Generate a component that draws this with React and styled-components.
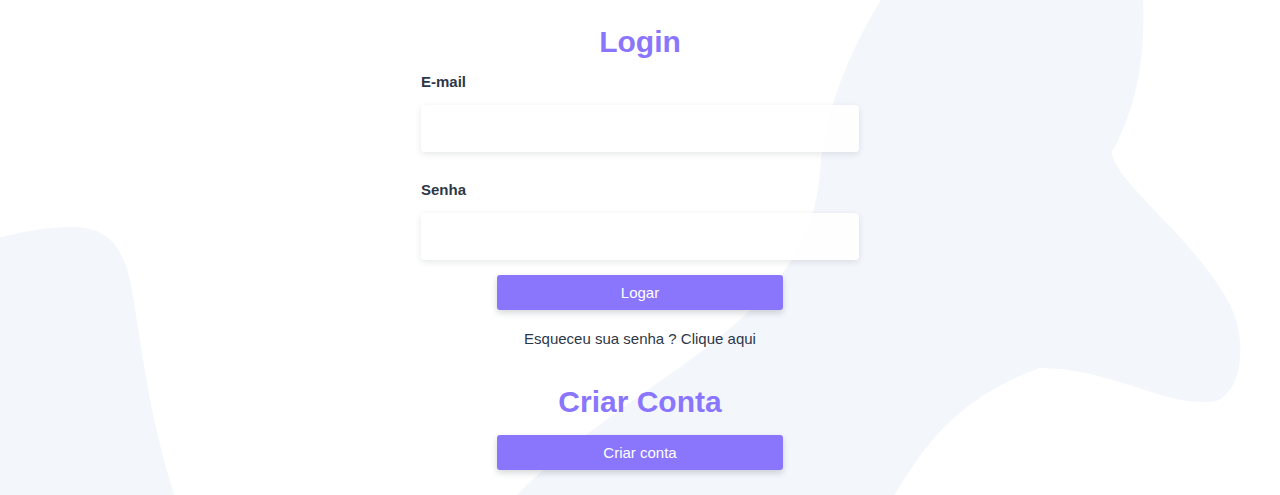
import React from "react";
import styled, { createGlobalStyle } from "styled-components";

const GlobalStyle = createGlobalStyle`
  * {
    box-sizing: border-box;
  }
  body {
    margin: 0;
    font-family: "Liberation Sans", Arial, sans-serif;
    background: #fff;
  }
`;

const Page = styled.div`
  position: relative;
  min-height: 100vh;
  overflow: hidden;
  background: #fff;
`;

const Backdrop = styled.svg`
  position: absolute;
  top: 0;
  left: 0;
  width: 1280px;
  height: 495px;
  z-index: 0;
`;

const Form = styled.form`
  position: relative;
  z-index: 1;
  width: 438px;
  margin: 0 auto;
  padding-top: 24px;
  display: flex;
  flex-direction: column;
`;

const Title = styled.h1`
  margin: 0 0 ${(props) => props.gap || 13}px;
  font-size: 30px;
  line-height: 36px;
  font-weight: 700;
  color: #8a76fd;
  text-align: center;
`;

const Label = styled.label`
  display: block;
  font-size: 15px;
  line-height: 18px;
  font-weight: 700;
  color: #2d3748;
  margin-bottom: 14px;
`;

const Field = styled.div`
  margin-bottom: ${(props) => props.gap || 0}px;
`;

const Input = styled.input`
  display: block;
  width: 100%;
  height: 47px;
  border: none;
  border-radius: 4px;
  padding: 0 14px;
  background: rgba(255, 255, 255, 0.88);
  box-shadow: 0 2px 6px rgba(45, 55, 72, 0.12);
  font-family: inherit;
  font-size: 15px;
  outline: none;
`;

const Button = styled.button`
  align-self: center;
  width: 286px;
  height: 35px;
  border: none;
  border-radius: 3px;
  background: #8a76fd;
  color: #fff;
  font-family: inherit;
  font-size: 15px;
  box-shadow: 0 3px 6px rgba(45, 55, 72, 0.2);
  cursor: pointer;
`;

const Forgot = styled.p`
  margin: 20px 0 36px;
  text-align: center;
  font-size: 15px;
  line-height: 18px;
  color: #2d3748;
`;

export default function App() {
  return (
    <Page>
      <GlobalStyle />
      <Backdrop viewBox="0 0 1280 495" aria-hidden="true">
        <path
          fill="#f3f6fb"
          d="M882 -2 C850 50, 825 110, 820 170 C815 250, 770 300, 690 360 C620 410, 560 450, 515 497 L893 497 C920 455, 950 400, 1040 368 C1110 368, 1160 405, 1210 402 C1240 400, 1250 345, 1230 305 C1200 245, 1120 185, 1113 157 C1110 150, 1113 150, 1113 150 C1135 110, 1146 60, 1143 -2 Z"
        />
        <path
          fill="#f3f6fb"
          d="M-2 238 C20 232, 50 226, 75 227 C110 228, 125 250, 132 290 C142 350, 150 420, 175 497 L-2 497 Z"
        />
      </Backdrop>
      <Form onSubmit={(e) => e.preventDefault()}>
        <Title>Login</Title>
        <Field gap={29}>
          <Label htmlFor="email">E-mail</Label>
          <Input id="email" type="email" />
        </Field>
        <Field gap={15}>
          <Label htmlFor="senha">Senha</Label>
          <Input id="senha" type="password" />
        </Field>
        <Button type="submit">Logar</Button>
        <Forgot>Esqueceu sua senha ? Clique aqui</Forgot>
        <Title gap={15}>Criar Conta</Title>
        <Button type="button">Criar conta</Button>
      </Form>
    </Page>
  );
}
